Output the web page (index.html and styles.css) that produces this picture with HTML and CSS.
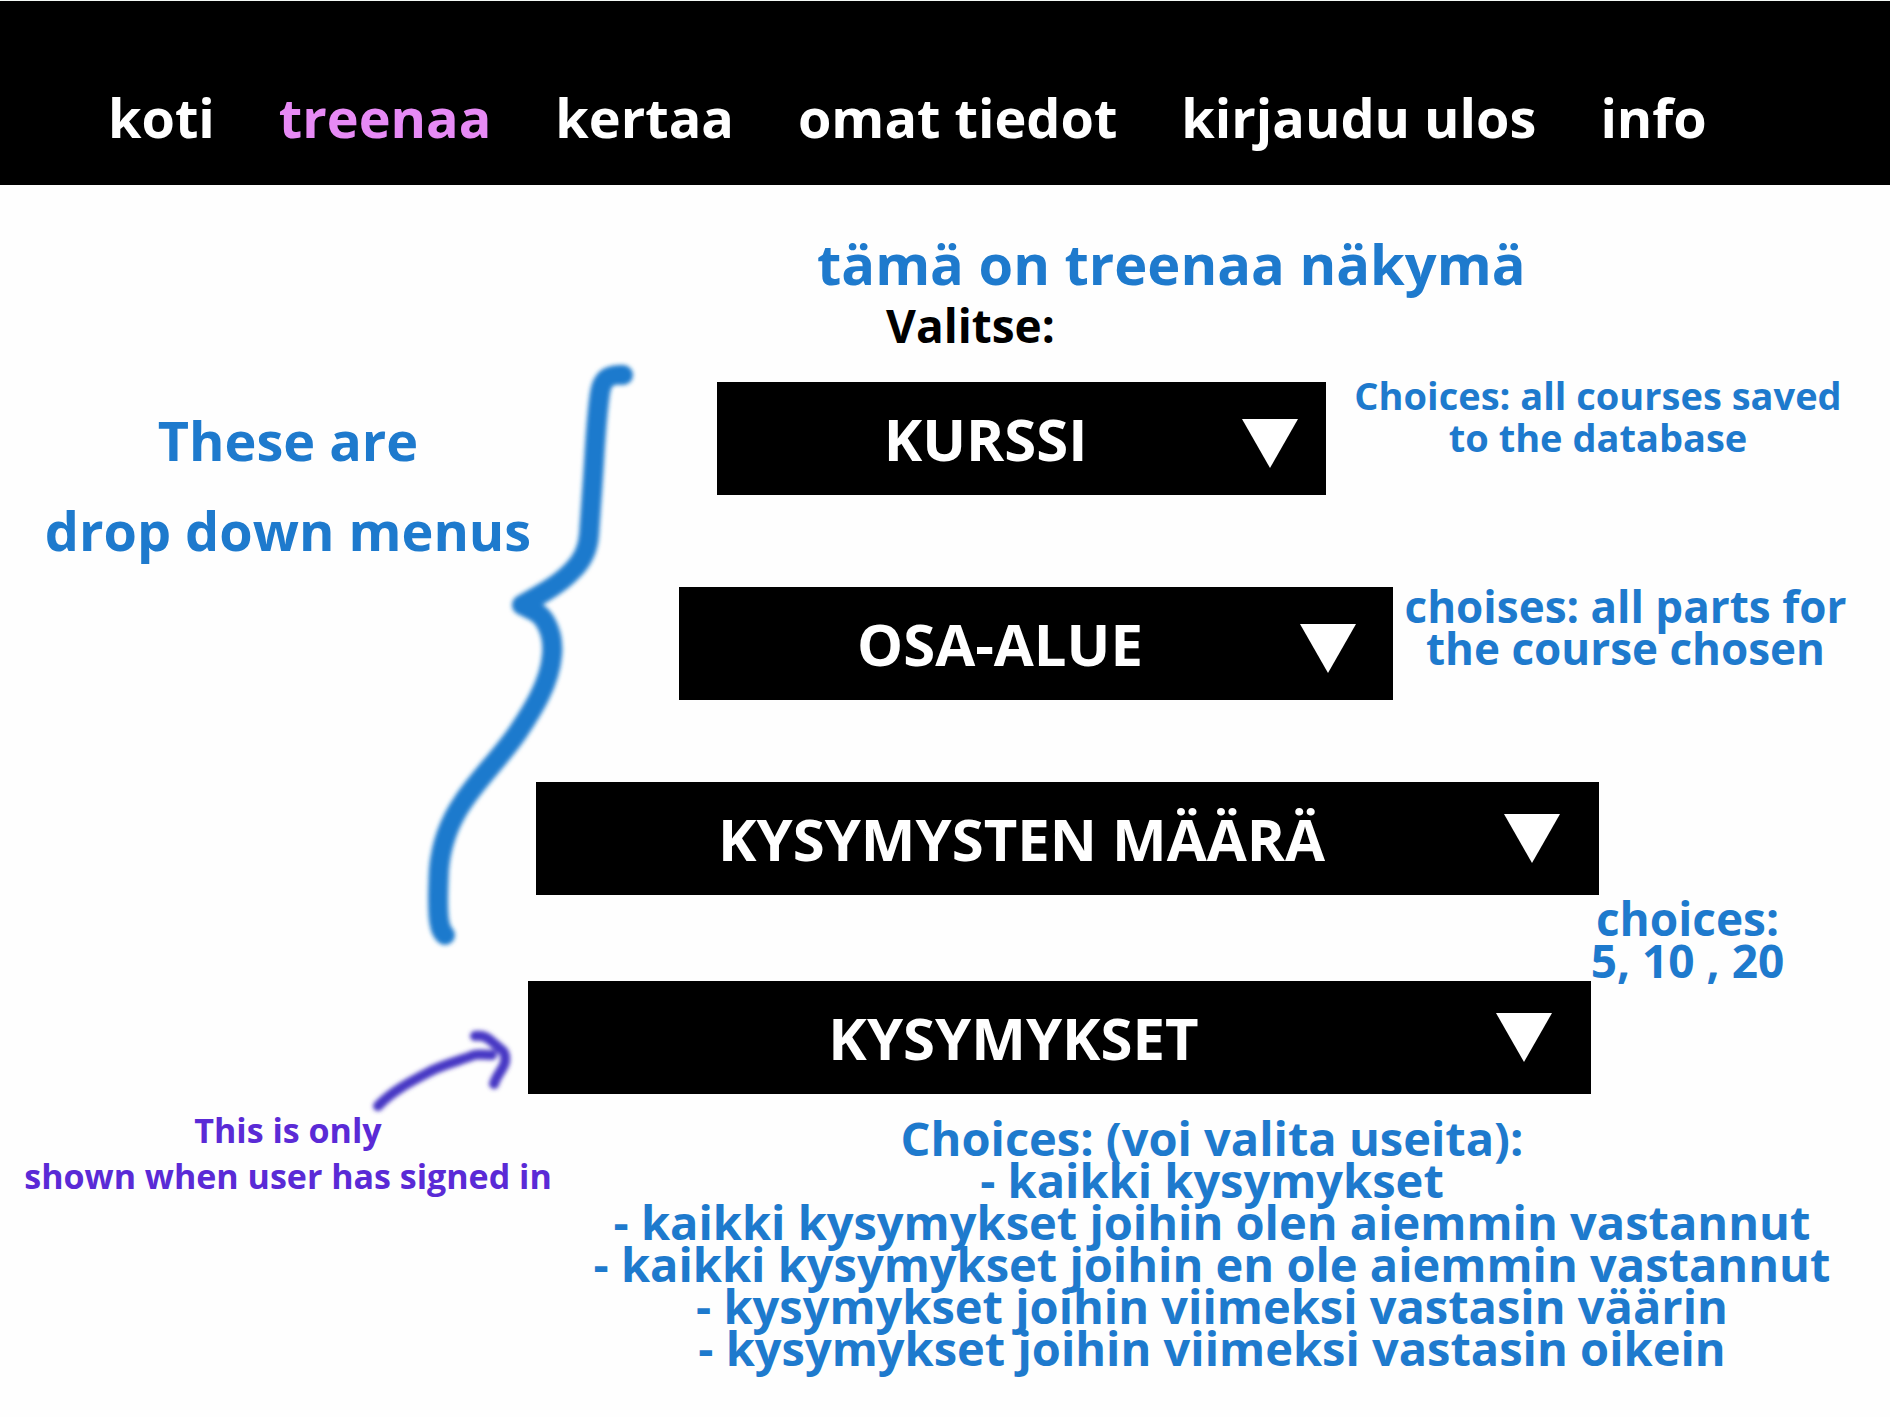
FILE: index.html
```html
<!DOCTYPE html>
<html lang="fi">
<head>
<meta charset="utf-8">
<meta name="viewport" content="width=device-width, initial-scale=1">
<title>treenaa</title>
<link rel="stylesheet" href="styles.css">
</head>
<body>
<header class="site-header">
  <nav class="site-nav">
    <a href="#koti">koti</a>
    <a href="#treenaa" class="current" aria-current="page">treenaa</a>
    <a href="#kertaa">kertaa</a>
    <a href="#omat-tiedot">omat tiedot</a>
    <a href="#kirjaudu-ulos">kirjaudu ulos</a>
    <a href="#info">info</a>
  </nav>
</header>

<main class="board">
  <aside class="remarks">
    <p class="remark-menus">These are<br>drop down menus</p>
    <p class="remark-signed-in">This is only<br>shown when user has signed in</p>
  </aside>

  <form class="picker">
    <div class="line line-title"><h1 class="title">tämä on treenaa näkymä</h1></div>
    <div class="line line-prompt"><h2 class="prompt">Valitse:</h2></div>

    <div class="line line-course">
      <div class="dropdown">
        <select class="field field-short" aria-label="Kurssi"><option>KURSSI</option></select>
        <svg class="arrow" viewBox="0 0 56 49" aria-hidden="true"><path d="M0 0H56L28 49Z"/></svg>
      </div>
      <p class="note note-small">Choices: all courses saved<br>to the database</p>
    </div>

    <div class="line line-part">
      <div class="dropdown">
        <select class="field field-short" aria-label="Osa-alue"><option>OSA-ALUE</option></select>
        <svg class="arrow" viewBox="0 0 56 49" aria-hidden="true"><path d="M0 0H56L28 49Z"/></svg>
      </div>
      <p class="note">choises: all parts for<br>the course chosen</p>
    </div>

    <div class="line line-count">
      <div class="dropdown">
        <select class="field" aria-label="Kysymysten määrä"><option>KYSYMYSTEN MÄÄRÄ</option></select>
        <svg class="arrow" viewBox="0 0 56 49" aria-hidden="true"><path d="M0 0H56L28 49Z"/></svg>
      </div>
    </div>

    <div class="line line-count-note">
      <p class="count-note">choices:<br>5, 10 , 20</p>
    </div>

    <div class="line line-questions">
      <div class="dropdown">
        <select class="field" aria-label="Kysymykset"><option>KYSYMYKSET</option></select>
        <svg class="arrow" viewBox="0 0 56 49" aria-hidden="true"><path d="M0 0H56L28 49Z"/></svg>
      </div>
    </div>

    <div class="choices">
      <p>Choices: (voi valita useita):</p>
      <ul>
        <li>- kaikki kysymykset</li>
        <li>- kaikki kysymykset joihin olen aiemmin vastannut</li>
        <li>- kaikki kysymykset joihin en ole aiemmin vastannut</li>
        <li>- kysymykset joihin viimeksi vastasin väärin</li>
        <li>- kysymykset joihin viimeksi vastasin oikein</li>
      </ul>
    </div>
  </form>

  <svg class="strokes" viewBox="0 185 1890 1000" aria-hidden="true">
    <defs>
      <filter id="soft" x="-10%" y="-10%" width="120%" height="120%"><feGaussianBlur stdDeviation="2"/></filter>
    </defs>
    <g filter="url(#soft)">
      <path class="brace" d="M623 375C608 374 602 379 600 393C596 420 595 448 593 478L589 535C588 549 583 560 573 570C559 585 541 594 522 605C534 611 541 613 546 623C552 634 553 645 552 655C550 683 532 711 518 732C501 757 479 778 463 802C448 824 441 846 439 869C438 889 437 915 440 925Q441 931 445 935"/>
      <path class="pointer" d="M378 1106C392 1091 410 1082 433 1070C448 1063 462 1060 474 1055Q478 1054 492 1055M475 1036Q484 1035 490 1040L503 1051Q506 1055 505 1062C503 1070 497 1074 494 1084"/>
    </g>
  </svg>
</main>
</body>
</html>
```
FILE: styles.css
```css
* {
  box-sizing: border-box;
}

body,
h1,
h2,
p,
ul {
  margin: 0;
  padding: 0;
}

body {
  background: #fefefe;
  color: #000;
  font-family: "Open Sans", "Noto Sans", sans-serif;
  font-weight: 700;
}

/* Header */
.site-header {
  border-top: 1px solid #f4f9f6;
  background: #000;
  padding: 82px 108px 34px;
}

.site-nav {
  display: flex;
  gap: 64px;
  font-size: 54px;
  line-height: 68px;
  white-space: nowrap;
}

.site-nav a {
  color: #fff;
  text-decoration: none;
}

.site-nav .current {
  color: #e78af5;
}

/* Page grid */
.board {
  position: relative;
  display: grid;
  grid-template-columns: minmax(0, 528fr) minmax(0, 1362fr);
  padding-bottom: 36px;
}

/* Left-hand remarks */
.remarks {
  margin-right: -24px;
  padding: 210px 0 0 24px;
  text-align: center;
  white-space: nowrap;
}

.remark-menus {
  color: #1e7acd;
  font-size: 54px;
  line-height: 90px;
}

.remark-signed-in {
  margin-top: 532px;
  color: #5a2ad6;
  font-size: 34px;
  line-height: 46px;
}

/* Form lines */
.picker {
  padding-top: 40px;
}

.line {
  display: grid;
  align-items: start;
  white-space: nowrap;
}

.line > * {
  grid-column: 2;
}

.line > .note {
  grid-column: 3;
}

.line-title {
  grid-template-columns: 289fr 1073fr;
}

.line-prompt {
  grid-template-columns: 358fr 1004fr;
  margin-bottom: 33px;
}

.line-course {
  grid-template-columns: minmax(0, 189fr) minmax(0, 609fr) minmax(0, 564fr);
  margin-bottom: 92px;
}

.line-part {
  grid-template-columns: minmax(0, 151fr) minmax(0, 714fr) minmax(0, 497fr);
  margin-bottom: 82px;
}

.line-count {
  grid-template-columns: minmax(0, 8fr) minmax(0, 1063fr) minmax(0, 291fr);
}

.line-count-note {
  grid-template-columns: minmax(0, 1058fr) minmax(0, 203fr) minmax(0, 101fr);
  padding-top: 2px;
}

.line-questions {
  grid-template-columns: minmax(0, 0fr) minmax(0, 1063fr) minmax(0, 299fr);
}

.title {
  color: #1e7acd;
  font-size: 56px;
  line-height: 76px;
}

.prompt {
  font-size: 46px;
  line-height: 48px;
}

/* Drop-downs */
.dropdown {
  display: grid;
}

.field {
  grid-area: 1 / 1;
  width: 100%;
  height: 113px;
  margin: 0;
  padding: 0 92px 0 0;
  border: 0;
  border-radius: 0;
  appearance: none;
  background: #000;
  color: #fff;
  font: inherit;
  font-size: 58px;
  text-align: center;
  text-align-last: center;
}

.field-short {
  padding-right: 72px;
}

.arrow {
  grid-area: 1 / 1;
  justify-self: end;
  width: 56px;
  height: 49px;
  margin: 32px 39px 0 0;
  fill: #fff;
  pointer-events: none;
}

.line-course .arrow {
  margin: 37px 28px 0 0;
}

.line-part .arrow {
  margin: 37px 37px 0 0;
}

/* Notes beside the drop-downs */
.note,
.count-note,
.choices {
  color: #1e7acd;
  line-height: 42px;
  text-align: center;
}

.note {
  margin-top: -2px;
  padding-right: 32px;
  font-size: 44px;
}

.note-small {
  margin-top: -8px;
  padding-right: 20px;
  font-size: 38px;
}

.count-note {
  font-size: 46px;
}

.choices {
  padding: 23px 0 0 6px;
  font-size: 47px;
  white-space: nowrap;
}

.choices ul {
  list-style: none;
}

/* Hand-drawn strokes over the page */
.strokes {
  position: absolute;
  top: 0;
  left: 0;
  width: 100%;
  pointer-events: none;
}

.brace,
.pointer {
  fill: none;
  stroke-linecap: round;
  stroke-linejoin: round;
}

.brace {
  stroke: #1e7acd;
  stroke-width: 20;
}

.pointer {
  stroke: #4638c4;
  stroke-width: 10;
}
```
